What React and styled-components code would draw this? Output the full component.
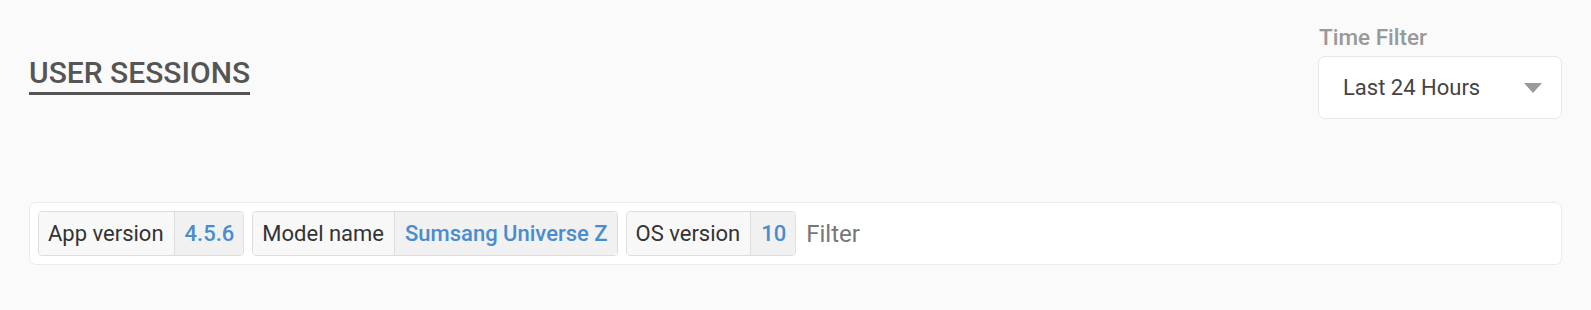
import React from 'react';
import styled, { createGlobalStyle } from 'styled-components';

const GlobalStyle = createGlobalStyle`
  html, body {
    margin: 0;
    padding: 0;
    background: #fafafa;
    font-family: Roboto, 'Noto Sans', sans-serif;
  }
`;

const filters = [
  { key: 'App version', value: '4.5.6' },
  { key: 'Model name', value: 'Sumsang Universe Z' },
  { key: 'OS version', value: '10' },
];

const App = () => {
  return (
    <StPage>
      <GlobalStyle />
      <StHeader>
        <StTitle>USER SESSIONS</StTitle>
        <StTimeFilter>
          <label htmlFor='time'>Time Filter</label>
          <StSelect id='time'>
            <span>Last 24 Hours</span>
            <i />
          </StSelect>
        </StTimeFilter>
      </StHeader>

      <StFilterBar>
        {filters.map(f => (
          <StChip key={f.key}>
            <span className='key'>{f.key}</span>
            <span className='value'>{f.value}</span>
          </StChip>
        ))}
        <StFilterInput placeholder='Filter' />
      </StFilterBar>
    </StPage>
  );
};

export default App;

const StPage = styled.div`
  padding: 24px 29px 0 29px;
`;

const StHeader = styled.div`
  display: flex;
  justify-content: space-between;
  align-items: flex-start;
`;

const StTitle = styled.h1`
  margin: 34px 0 0 0;
  font-size: 30px;
  line-height: 1;
  font-weight: 500;
  color: #555;
  padding-bottom: 4px;
  border-bottom: 3px solid #555;
`;

const StTimeFilter = styled.div`
  display: flex;
  flex-direction: column;
  width: 244px;
  label {
    font-size: 22.5px;
    line-height: 26px;
    font-weight: 500;
    color: #999;
    margin-left: 1px;
  }
`;

const StSelect = styled.div`
  box-sizing: border-box;
  margin-top: 6px;
  height: 63px;
  display: flex;
  align-items: center;
  justify-content: space-between;
  padding: 0 19px 0 24px;
  background: #fff;
  border: 1px solid #e8e8e8;
  border-radius: 7px;
  span {
    font-size: 22px;
    color: #444;
  }
  i {
    width: 0;
    height: 0;
    border-left: 9px solid transparent;
    border-right: 9px solid transparent;
    border-top: 10px solid #999;
  }
`;

const StFilterBar = styled.div`
  box-sizing: border-box;
  margin-top: 83px;
  height: 63px;
  display: flex;
  align-items: center;
  gap: 8px;
  padding: 0 8px;
  background: #fff;
  border: 1px solid #ebebeb;
  border-radius: 7px;
`;

const StChip = styled.div`
  box-sizing: border-box;
  height: 45px;
  display: flex;
  border: 1px solid #dddddd;
  border-radius: 4px;
  overflow: hidden;
  font-size: 22px;
  span {
    display: flex;
    align-items: center;
  }
  .key {
    padding: 0 10px 0 9px;
    background: #f8f8f8;
    color: #333;
  }
  .value {
    padding: 0 9px 0 10px;
    background: #f1f1f1;
    border-left: 1px solid #dddddd;
    color: #4a8ccc;
    font-weight: 500;
  }
`;

const StFilterInput = styled.input`
  flex: 1;
  margin-left: 0;
  padding-left: 2px;
  border: none;
  outline: none;
  background: transparent;
  font-family: Roboto, sans-serif;
  font-size: 24px;
  color: #555;
  &::placeholder {
    color: #777;
  }
`;
